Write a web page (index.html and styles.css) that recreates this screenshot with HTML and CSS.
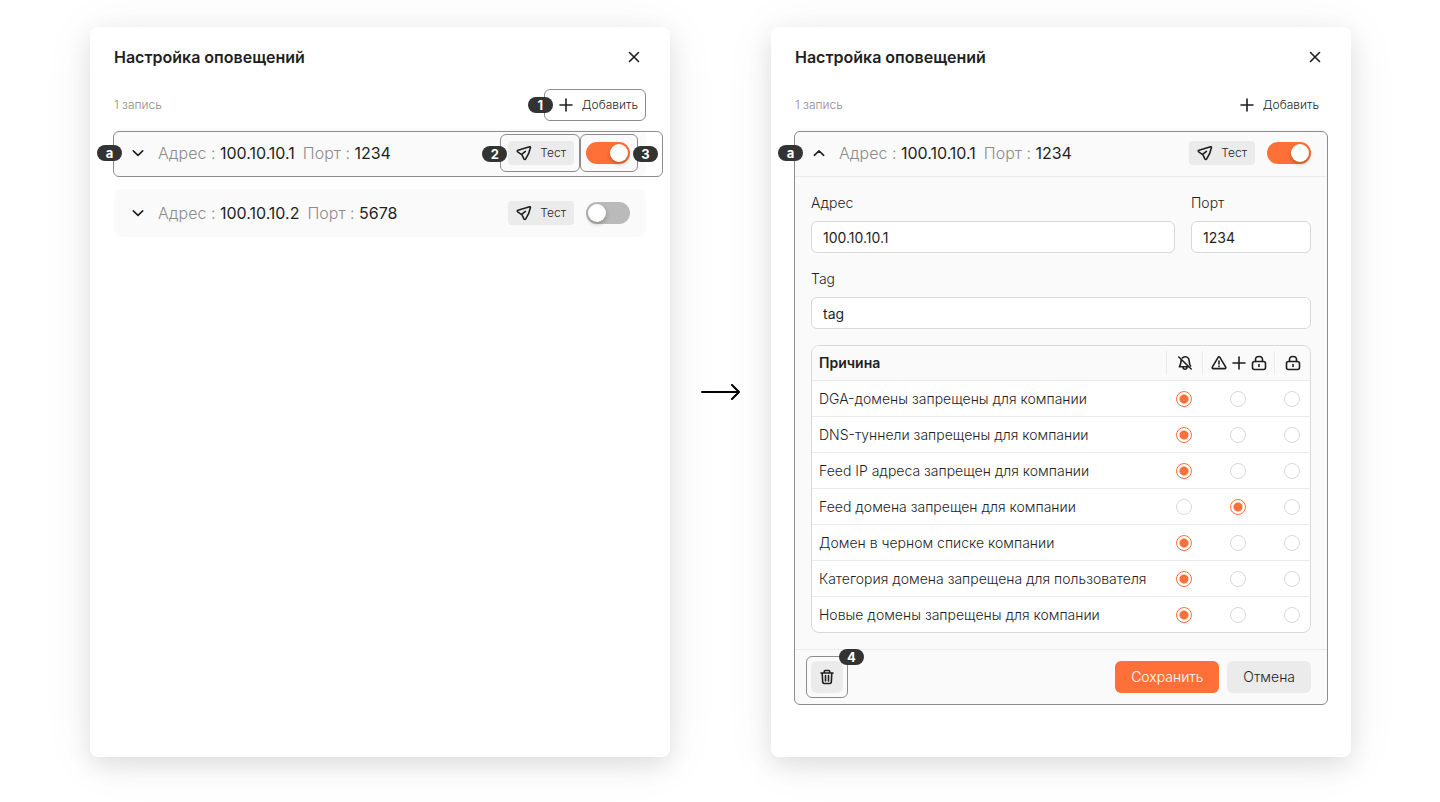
FILE: index.html
```html
<!DOCTYPE html>
<html lang="ru">
<head>
  <meta charset="UTF-8"/>
  <meta name="viewport" content="width=device-width, initial-scale=1.0"/>
  <title>Настройка оповещений</title>
  <link rel="stylesheet" href="styles.css">
</head>
<body>
  <!-- Shared icons -->
  <svg class="sprite" aria-hidden="true">
    <symbol id="i-close" viewBox="0 0 16 16"><path d="M3.5 3.5l9 9M12.5 3.5l-9 9"/></symbol>
    <symbol id="i-plus" viewBox="0 0 16 16"><path d="M8 2v12M2 8h12"/></symbol>
    <symbol id="i-down" viewBox="0 0 16 16"><path d="M3.3 5.8L8 10.3l4.7-4.5"/></symbol>
    <symbol id="i-up" viewBox="0 0 16 16"><path d="M3.3 10.3L8 5.8l4.7 4.5"/></symbol>
    <symbol id="i-send" viewBox="0 0 16 16"><path d="M13.6 1.7L2 5.2c-.9.3-1 1.2-.3 1.7l3.6 2.4c.6.4 1 .8 1.2 1.5l1.4 3.1c.4.8 1.4.8 1.8 0C11.6 11.2 13.6 7 14.4 2.6c.2-.7-.1-1-.8-.9zM5.7 9.4l3.7-3"/></symbol>
    <symbol id="i-bell-off" viewBox="0 0 16 16"><path d="M1.8 2l12.4 12M4.2 4.6C3.7 7.5 4.2 9.5 2.3 11.7H11.7M5.4 2.9C8.5.3 12.2 2.4 12.2 6c0 2 .4 3.6 1.4 5M6 12.2c.2 2.7 3.8 2.7 4 0"/></symbol>
    <symbol id="i-warn" viewBox="0 0 16 16"><path d="M7.1 2.3L1.3 12.1c-.4.8 0 1.5.9 1.5h11.6c.9 0 1.3-.7.9-1.5L8.9 2.3c-.4-.7-1.4-.7-1.8 0zM8 6v3M8 11v.6"/></symbol>
    <symbol id="i-lock" viewBox="0 0 16 16"><rect x="1.5" y="6.5" width="13" height="8" rx="2"/><path d="M4.5 6.5V4.6c0-4.2 7-4.2 7 0v1.9M8 9.5v2"/></symbol>
    <symbol id="i-trash" viewBox="0 0 16 16"><path d="M2 4h12M5.2 4V2.7C5.2 1.9 5.6 1.5 6.3 1.5h3.4c.7 0 1.1.4 1.1 1.2V4M3.2 4l.5 9.2c.1.8.6 1.3 1.4 1.3h5.8c.8 0 1.3-.5 1.4-1.3l.5-9.2M6.5 6.5v5.5M9.5 6.5v5.5"/></symbol>
  </svg>

  <main class="page">
    <!-- Collapsed list -->
    <section class="panel">
      <header class="panel-head">
        <h2>Настройка оповещений</h2>
        <button class="icon-btn" aria-label="Закрыть"><svg class="icon"><use href="#i-close"/></svg></button>
      </header>
      <div class="toolbar">
        <span class="count">1 запись</span>
        <div class="anchor">
          <button class="add-btn"><svg class="icon"><use href="#i-plus"/></svg>Добавить</button>
          <span class="callout callout-add"><b class="badge badge-left">1</b></span>
        </div>
      </div>
      <div class="cards">
        <article class="card">
          <div class="card-head">
            <button class="chevron" aria-label="Развернуть"><svg class="icon"><use href="#i-down"/></svg></button>
            <div class="summary"><span>Адрес : <b>100.10.10.1</b></span><span>Порт : <b>1234</b></span></div>
            <div class="anchor">
              <button class="test-btn"><svg class="icon"><use href="#i-send"/></svg>Тест</button>
              <span class="callout callout-test"><b class="badge badge-left">2</b></span>
            </div>
            <div class="anchor">
              <input class="switch" type="checkbox" aria-label="Включить 100.10.10.1" checked/>
              <span class="callout callout-switch"><b class="badge badge-right">3</b></span>
            </div>
          </div>
          <span class="callout callout-row"><b class="badge badge-left">a</b></span>
        </article>
        <article class="card">
          <div class="card-head">
            <button class="chevron" aria-label="Развернуть"><svg class="icon"><use href="#i-down"/></svg></button>
            <div class="summary"><span>Адрес : <b>100.10.10.2</b></span><span>Порт : <b>5678</b></span></div>
            <button class="test-btn"><svg class="icon"><use href="#i-send"/></svg>Тест</button>
            <input class="switch" type="checkbox" aria-label="Включить 100.10.10.2"/>
          </div>
        </article>
      </div>
    </section>

    <svg class="arrow" viewBox="0 0 40 16" aria-hidden="true"><path d="M1 8h37M31 1l7 7-7 7"/></svg>

    <!-- Expanded card -->
    <section class="panel">
      <header class="panel-head">
        <h2>Настройка оповещений</h2>
        <button class="icon-btn" aria-label="Закрыть"><svg class="icon"><use href="#i-close"/></svg></button>
      </header>
      <div class="toolbar">
        <span class="count">1 запись</span>
        <button class="add-btn"><svg class="icon"><use href="#i-plus"/></svg>Добавить</button>
      </div>
      <article class="card">
        <div class="card-head card-head-open">
          <button class="chevron" aria-label="Свернуть"><svg class="icon"><use href="#i-up"/></svg></button>
          <div class="summary"><span>Адрес : <b>100.10.10.1</b></span><span>Порт : <b>1234</b></span></div>
          <button class="test-btn"><svg class="icon"><use href="#i-send"/></svg>Тест</button>
          <input class="switch" type="checkbox" aria-label="Включить" checked/>
        </div>
        <form class="card-body">
          <div class="fields">
            <div class="field">
              <label for="address">Адрес</label>
              <input id="address" type="text" value="100.10.10.1"/>
            </div>
            <div class="field">
              <label for="port">Порт</label>
              <input id="port" type="text" value="1234"/>
            </div>
          </div>
          <div class="field">
            <label for="tag">Tag</label>
            <input id="tag" type="text" value="tag"/>
          </div>
          <div class="table-box">
            <table>
              <thead>
                <tr>
                  <th class="reason">Причина</th>
                  <th class="narrow"><div class="marks"><svg class="icon"><use href="#i-bell-off"/></svg></div></th>
                  <th class="wide"><div class="marks"><svg class="icon"><use href="#i-warn"/></svg><svg class="icon"><use href="#i-plus"/></svg><svg class="icon"><use href="#i-lock"/></svg></div></th>
                  <th class="narrow"><div class="marks"><svg class="icon"><use href="#i-lock"/></svg></div></th>
                </tr>
              </thead>
              <tbody>
                <tr>
                  <td>DGA-домены запрещены для компании</td>
                  <td><input type="radio" name="dga" aria-label="Не оповещать" checked/></td>
                  <td><input type="radio" name="dga" aria-label="Оповещать и блокировать"/></td>
                  <td><input type="radio" name="dga" aria-label="Блокировать"/></td>
                </tr>
                <tr>
                  <td>DNS-туннели запрещены для компании</td>
                  <td><input type="radio" name="dns" aria-label="Не оповещать" checked/></td>
                  <td><input type="radio" name="dns" aria-label="Оповещать и блокировать"/></td>
                  <td><input type="radio" name="dns" aria-label="Блокировать"/></td>
                </tr>
                <tr>
                  <td>Feed IP адреса запрещен для компании</td>
                  <td><input type="radio" name="feed-ip" aria-label="Не оповещать" checked/></td>
                  <td><input type="radio" name="feed-ip" aria-label="Оповещать и блокировать"/></td>
                  <td><input type="radio" name="feed-ip" aria-label="Блокировать"/></td>
                </tr>
                <tr>
                  <td>Feed домена запрещен для компании</td>
                  <td><input type="radio" name="feed-domain" aria-label="Не оповещать"/></td>
                  <td><input type="radio" name="feed-domain" aria-label="Оповещать и блокировать" checked/></td>
                  <td><input type="radio" name="feed-domain" aria-label="Блокировать"/></td>
                </tr>
                <tr>
                  <td>Домен в черном списке компании</td>
                  <td><input type="radio" name="blacklist" aria-label="Не оповещать" checked/></td>
                  <td><input type="radio" name="blacklist" aria-label="Оповещать и блокировать"/></td>
                  <td><input type="radio" name="blacklist" aria-label="Блокировать"/></td>
                </tr>
                <tr>
                  <td>Категория домена запрещена для пользователя</td>
                  <td><input type="radio" name="category" aria-label="Не оповещать" checked/></td>
                  <td><input type="radio" name="category" aria-label="Оповещать и блокировать"/></td>
                  <td><input type="radio" name="category" aria-label="Блокировать"/></td>
                </tr>
                <tr>
                  <td>Новые домены запрещены для компании</td>
                  <td><input type="radio" name="new" aria-label="Не оповещать" checked/></td>
                  <td><input type="radio" name="new" aria-label="Оповещать и блокировать"/></td>
                  <td><input type="radio" name="new" aria-label="Блокировать"/></td>
                </tr>
              </tbody>
            </table>
          </div>
        </form>
        <footer class="card-foot">
          <div class="anchor delete">
            <button class="btn btn-square" aria-label="Удалить"><svg class="icon"><use href="#i-trash"/></svg></button>
            <span class="callout callout-delete"><b class="badge badge-corner">4</b></span>
          </div>
          <button class="btn btn-primary">Сохранить</button>
          <button class="btn">Отмена</button>
        </footer>
        <span class="callout callout-card"><b class="badge badge-left">a</b></span>
      </article>
    </section>
  </main>
</body>
</html>
```
FILE: styles.css
```css
:root {
  --text: #1f1f1f;
  --muted: #8c8c8c;
  --accent: #ff7038;
  --soft: #fafafa;
  --button: #ebebeb;
  --line: #ebebeb;
  --border: #d9d9d9;
  --mark: #333333;
}

* {
  box-sizing: border-box;
}

body {
  margin: 0;
  background: #fff;
  color: var(--text);
  font-family: Inter, "Noto Sans", sans-serif;
  font-size: 14px;
  font-weight: 300;
  line-height: 20px;
}

button,
input {
  font: inherit;
  color: inherit;
  margin: 0;
}

button {
  display: flex;
  align-items: center;
  justify-content: center;
  border: none;
  padding: 0;
  background: none;
  cursor: pointer;
}

.sprite {
  display: none;
}

.icon {
  width: 16px;
  height: 16px;
  flex-shrink: 0;
  fill: none;
  stroke: currentColor;
  stroke-width: 1.6;
  stroke-linecap: round;
  stroke-linejoin: round;
}

.page {
  min-height: 100vh;
  display: grid;
  grid-template-columns: 1fr 101px 1fr;
  padding: 27px 89px 45px 90px;
}

.panel {
  background: #fff;
  border-radius: 8px;
  padding: 18px 24px 24px;
  box-shadow: 0 8px 24px rgba(0, 0, 0, 0.1), 0 4px 56px rgba(0, 0, 0, 0.06);
}

.panel-head {
  display: flex;
  justify-content: space-between;
  align-items: center;
  margin-bottom: 20px;
}

.panel-head h2 {
  margin: 0;
  font-size: 16px;
  line-height: 24px;
  font-weight: 600;
}

.icon-btn {
  width: 24px;
  height: 24px;
}

.toolbar {
  display: flex;
  justify-content: space-between;
  align-items: center;
  margin-bottom: 8px;
  font-size: 12px;
}

.count {
  color: var(--muted);
}

.add-btn {
  height: 32px;
  padding: 0 8px;
  gap: 8px;
}

.cards {
  display: flex;
  flex-direction: column;
  gap: 12px;
}

.card {
  position: relative;
  background: var(--soft);
  border-radius: 8px;
}

.card-head {
  display: flex;
  align-items: center;
  gap: 12px;
  height: 48px;
  padding: 0 16px;
}

.card-head-open {
  border-bottom: 1px solid var(--line);
}

.summary {
  flex: 1;
  display: flex;
  gap: 8px;
  font-size: 16px;
  line-height: 24px;
  color: var(--muted);
}

.summary b {
  font-weight: 400;
  color: var(--text);
}

.test-btn {
  height: 24px;
  padding: 0 8px;
  gap: 8px;
  font-size: 12px;
  background: var(--button);
  border-radius: 4px;
}

.switch {
  appearance: none;
  display: flex;
  align-items: center;
  width: 44px;
  height: 22px;
  padding: 0 2px;
  border-radius: 11px;
  background: #bababa;
  cursor: pointer;
}

.switch::before {
  content: "";
  width: 18px;
  height: 18px;
  border-radius: 50%;
  background: #fff;
  box-shadow: 0 2px 4px rgba(0, 35, 11, 0.3);
}

.switch:checked {
  justify-content: flex-end;
  background: var(--accent);
}

/* Form */
.card-body {
  display: flex;
  flex-direction: column;
  gap: 16px;
  padding: 16px;
}

.fields {
  display: grid;
  grid-template-columns: 1fr 120px;
  gap: 16px;
}

.field {
  display: flex;
  flex-direction: column;
  gap: 8px;
}

.field input {
  width: 100%;
  height: 32px;
  padding: 0 11px;
  background: #fff;
  border: 1px solid var(--border);
  border-radius: 6px;
  font-weight: 400;
}

.table-box {
  border: 1px solid var(--border);
  border-radius: 8px;
  overflow: hidden;
  background: #fff;
}

table {
  width: 100%;
  table-layout: fixed;
  border-collapse: separate;
  border-spacing: 0;
}

th,
td {
  height: 36px;
  padding: 0;
  text-align: center;
  border-bottom: 1px solid var(--line);
}

th {
  height: 35px;
  background: var(--soft);
}

tr:last-child td {
  height: 35px;
  border-bottom: none;
}

th:first-child,
td:first-child {
  padding-left: 7px;
  text-align: left;
}

.reason {
  font-weight: 600;
}

.narrow {
  width: 36px;
}

.wide {
  width: 72px;
}

.marks {
  display: flex;
  align-items: center;
  justify-content: center;
  gap: 4px;
  height: 24px;
  border-left: 1px solid var(--line);
}

input[type="radio"] {
  appearance: none;
  display: block;
  width: 16px;
  height: 16px;
  margin: 0 auto;
  border: 1px solid var(--border);
  border-radius: 50%;
  background: #fff;
}

input[type="radio"]:checked {
  border-color: var(--accent);
  background: radial-gradient(circle, var(--accent) 0 4px, #fff 5px);
}

.card-foot {
  display: flex;
  gap: 8px;
  padding: 11px 16px 12px;
  border-top: 1px solid var(--line);
}

.delete {
  margin-right: auto;
}

.btn {
  height: 32px;
  padding: 0 16px;
  border-radius: 6px;
  background: var(--button);
}

.btn-square {
  width: 32px;
  padding: 0;
}

.btn-primary {
  background: var(--accent);
  color: #fff;
}

.arrow {
  width: 40px;
  height: 16px;
  place-self: center;
  fill: none;
  stroke: #000;
  stroke-width: 2;
  stroke-linecap: round;
  stroke-linejoin: round;
}

/* Numbered callouts over the controls */
.anchor {
  position: relative;
}

.callout {
  position: absolute;
  border: 1px solid #8c8c8c;
  border-radius: 6px;
  pointer-events: none;
}

.callout-add {
  inset: 0 0 0 -6px;
}

.callout-test {
  inset: -7px -6px -7px -8px;
}

.callout-switch {
  inset: -8px -8px -8px -6px;
}

.callout-row {
  inset: 2px -17px 0 -1px;
}

.callout-card {
  inset: 2px -1px 0;
}

.callout-delete {
  inset: -5px;
}

.badge {
  position: absolute;
  width: 25px;
  height: 16px;
  border-radius: 8px;
  background: var(--mark);
  color: #fff;
  font-size: 13px;
  font-weight: 700;
  line-height: 16px;
  text-align: center;
}

.badge-left {
  top: calc(50% - 8px);
  left: -17px;
}

.callout-test .badge,
.callout-switch .badge {
  top: 11px;
}

.callout-test .badge {
  left: -19px;
}

.callout-row .badge,
.callout-card .badge {
  top: 13px;
}

.badge-right {
  right: -21px;
}

.badge-corner {
  top: -8px;
  right: -17px;
}

@media (max-width: 1100px) {
  .page {
    grid-template-columns: 1fr;
    gap: 32px;
    padding: 24px;
  }

  .arrow {
    transform: rotate(90deg);
  }
}
```
